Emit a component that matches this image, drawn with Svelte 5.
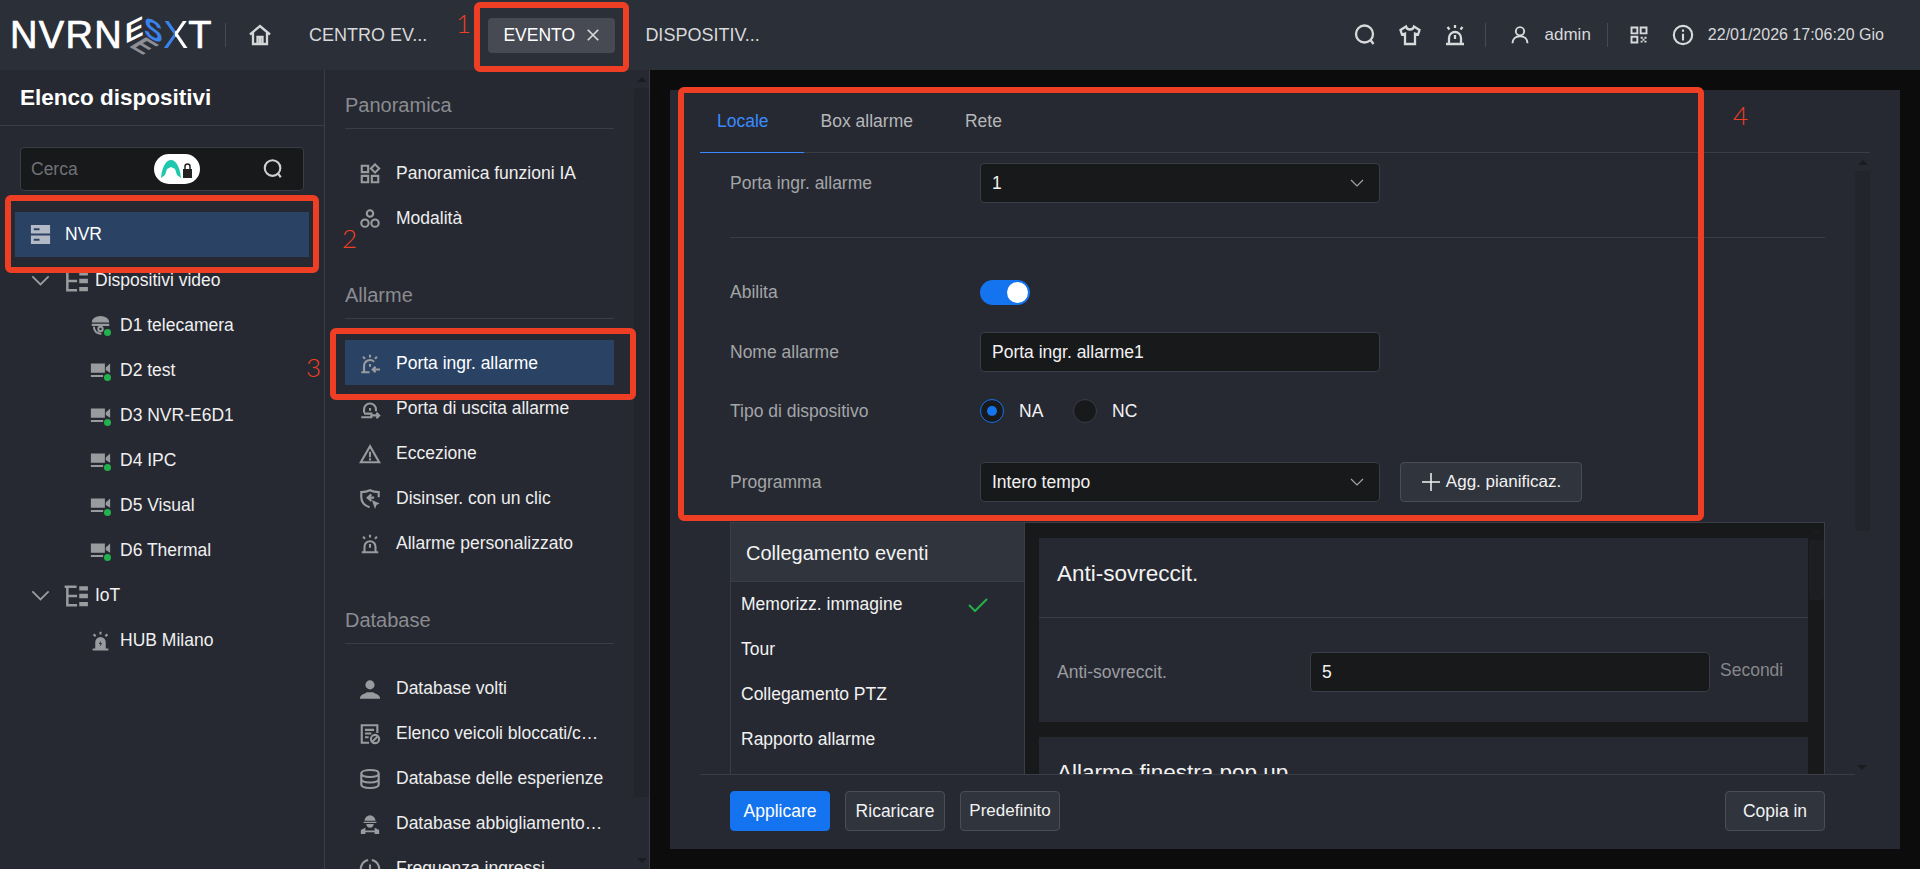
<script>
  const circle = (x, y, r) => `M${x - r} ${y}a${r} ${r} 0 1 0 ${r * 2} 0a${r} ${r} 0 1 0 ${-r * 2} 0z`;

  // each icon: list of [path, 'f' (filled) or 's' (stroked)]
  const icons = {
    home: [['M2 11.500 12 3l10 8.500M5 9.500V21h14V9.500M9.500 21v-7h5v7M12 14v7', 's']],
    search: [[circle(11.500, 11, 8.500), 's'], ['M17.500 17l3 4', 's']],
    shirt: [['M8 3.500 2.500 7l1.500 4.500L7 10.500V21h10V10.500l3 1L21.500 7 16 3.500c-.5 2-2 3-4 3s-3.500-1-4-3z', 's']],
    siren: [['M6 20v-5a6 6 0 0 1 12 0v5M3 21h18M12 2v3M4.500 4l2 2.500M19.500 4l-2 2.500M12 12v4', 's']],
    user: [[circle(12, 7.500, 5), 's'], ['M3 22c0-5 3.500-8.500 9-8.500s9 3.500 9 8.500', 's']],
    qr: [['M3 3h7v7H3zM14 3h7v7h-7zM3 14h7v7H3z', 's'], ['M14 14h2.500v2.500H14zM18.500 14H21v2.500h-2.500zM16.300 16.500h2.200v2.300h-2.200zM14 18.800h2.300V21H14zM18.500 18.800H21V21h-2.500z', 'f']],
    info: [[circle(12, 12, 10), 's'], ['M12 10.500V18M12 6v2.500', 's']],
    close: [['M5 5l14 14M19 5 5 19', 's']],
    server: [['M2 2h20v9H2zM5 5.500v2h6v-2zM2 13h20v9H2zM5 16.500v2h6v-2z', 'f']],
    tree: [['M15 3h8v4h-8zM15 10h8v4h-8zM15 17.500h8v4h-8z', 'f'], ['M1.500 3.500h11M4 3.500v17h9M4 12h9', 's']],
    dome: [['M2 8.500a10 7.500 0 0 1 20 0zM2 10h20v2.500H2z', 'f'], ['M4.500 13.500c0 5 3.500 8 8.500 8', 's'], [circle(12, 16, 2.500), 's']],
    cam: [['M1 4h16v10.500H1zM18 8.500 23 4v10.500l-5-3zM1 17h14v2.500H1z', 'f']],
    hub: [['M6 21v-7a6 6 0 0 1 12 0v7zM13 12l-3 4h2l-1 3 3-4h-2zM3 21h18v2.500H3z', 'f'], ['M12 2v3M4 5l2.500 2M20 5l-2.500 2', 's']],
    ai: [['M3 3h7v7H3zM3 14h7v7H3zM14 14h7v7h-7zM17.500 1.500l4.500 4.500-4.500 4.500L13 6z', 's']],
    mode: [[circle(12, 6, 3.500), 's'], [circle(6.500, 16.500, 4), 's'], [circle(17.500, 16.500, 4), 's']],
    alarmIn: [['M5.500 20v-6a6.500 6.500 0 0 1 11-4.500M2.500 21h9M12 2v3M4.500 4l2 2.500M19.500 4l-2 2.500M12 12v3M23 18h-8M18 15l-3 3 3 3', 's']],
    alarmOut: [['M5.500 16v-3.500a6.500 6.500 0 0 1 13 0v2M2.500 21h11v-4H5.500M12 11v3M14 19h8M19 16l3 3-3 3', 's']],
    warn: [['M12 3.500 2 21h20z', 's'], ['M12 9.500v6M12 16.500v2.500', 's']],
    shield: [['M21.500 10V4.500C16 4.500 14 3.500 12 2.500c-2 1-4 2-9.500 2V10c0 5 3.500 9 9 11', 's'], ['M13.500 7l-4 3.500 4 3.500M9.500 10.500h7', 's'], ['M14 13l8.500 4-3.500 1.500L17.500 23z', 'f']],
    person: [[circle(12, 7.500, 5), 'f'], ['M1 22.500c0-4.500 5-5 7.500-7h7c2.500 2 7.500 2.500 7.500 7z', 'f']],
    list: [['M20 11V2.500H3v19h8M6.500 7.500h10M6.500 11.500h7M6.500 15.500h4', 's'], [circle(17.500, 17.500, 4.500), 's'], ['M14.500 20.500l6-6', 's']],
    db: [['M2.500 6c0-5 19-5 19 0s-19 5-19 0zM2.500 6v12c0 5 19 5 19 0V6M2.500 12c0 5 19 5 19 0', 's']],
    worker: [['M6 8.500a6 6 0 0 1 12 0zM5 9.500h14V11H5zM8 12h8c0 2.500-1.500 4-4 4s-4-1.500-4-4zM2 23v-4.500L7 16v3h10v-3l5 2.500V23h-5v-2H7v2z', 'f']],
    chart: [['M10 2.200a10 10 0 1 0 4 0', 's'], ['M8 18v-4M12 18V7M16 18v-6', 's']]
  };

  const tree = [
    { label: 'Dispositivi video', icon: 'tree', group: true },
    { label: 'D1 telecamera', icon: 'dome', online: true },
    { label: 'D2 test', icon: 'cam', online: true },
    { label: 'D3 NVR-E6D1', icon: 'cam', online: true },
    { label: 'D4 IPC', icon: 'cam', online: true },
    { label: 'D5 Visual', icon: 'cam', online: true },
    { label: 'D6 Thermal', icon: 'cam', online: true },
    { label: 'IoT', icon: 'tree', group: true },
    { label: 'HUB Milano', icon: 'hub' }
  ];

  const groups = [
    {
      title: 'Panoramica',
      items: [
        { label: 'Panoramica funzioni IA', icon: 'ai' },
        { label: 'Modalità', icon: 'mode' }
      ]
    },
    {
      title: 'Allarme',
      items: [
        { label: 'Porta ingr. allarme', icon: 'alarmIn', active: true },
        { label: 'Porta di uscita allarme', icon: 'alarmOut' },
        { label: 'Eccezione', icon: 'warn' },
        { label: 'Disinser. con un clic', icon: 'shield' },
        { label: 'Allarme personalizzato', icon: 'siren' }
      ]
    },
    {
      title: 'Database',
      items: [
        { label: 'Database volti', icon: 'person' },
        { label: 'Elenco veicoli bloccati/c…', icon: 'list' },
        { label: 'Database delle esperienze', icon: 'db' },
        { label: 'Database abbigliamento…', icon: 'worker' },
        { label: 'Frequenza ingressi', icon: 'chart' }
      ]
    }
  ];

  const links = ['Memorizz. immagine', 'Tour', 'Collegamento PTZ', 'Rapporto allarme'];
</script>

{#snippet icon(name, size = 20)}
  <svg class="icon" width={size} height={size} viewBox="0 0 24 24" aria-hidden="true">
    {#each icons[name] as [d, mode]}
      {#if mode === 'f'}
        <path {d} fill="currentColor" fill-rule="evenodd" />
      {:else}
        <path {d} fill="none" stroke="currentColor" stroke-width="2.300" />
      {/if}
    {/each}
  </svg>
{/snippet}

{#snippet chevron(width = 14, weight = 1.200)}
  <svg class="chevron" {width} height={width * 0.55} viewBox="0 0 14 7.700" aria-hidden="true">
    <path d="M1 1l6 6 6-6" fill="none" stroke="currentColor" stroke-width={weight} />
  </svg>
{/snippet}

<div class="app">
  <header class="topbar">
    <div class="logo">
      <span class="logo-n">NVRN</span>
      <svg class="cube" width="44" height="44" viewBox="0 0 44 44" aria-hidden="true">
        <text class="cube-e" transform="matrix(1 -.5 0 1 3 31)">E</text>
        <text class="cube-s" transform="matrix(1 .5 0 1 22 22)">S</text>
        <text class="cube-g" transform="matrix(.85 .5 -.85 .5 6 33)">E</text>
      </svg>
      <span class="logo-x">X</span><span>T</span>
    </div>
    <span class="vline logo-line"></span>
    <span class="home">{@render icon('home', 24)}</span>
    <span class="nav nav-first">CENTRO EV...</span>
    <span class="tab-pill">EVENTO <span class="pill-x">{@render icon('close', 18)}</span></span>
    <span class="nav">DISPOSITIV...</span>

    <div class="top-right">
      <span class="top-icon">{@render icon('search', 24)}</span>
      <span class="top-icon">{@render icon('shirt', 24)}</span>
      <span class="top-icon siren">{@render icon('siren', 24)}</span>
      <span class="vline sep-user"></span>
      <span class="top-icon user">{@render icon('user', 20)}</span>
      <span class="admin">admin</span>
      <span class="vline sep-qr"></span>
      <span class="top-icon qr">{@render icon('qr', 20)}</span>
      <span class="top-icon info">{@render icon('info', 22)}</span>
      <span class="clock">22/01/2026 17:06:20 Gio</span>
    </div>
  </header>

  <div class="content">
    <aside class="devices">
      <h2>Elenco dispositivi</h2>
      <div class="search">
        <span class="placeholder">Cerca</span>
        <span class="badge">
          <svg width="34" height="22" viewBox="0 0 34 22" aria-hidden="true">
            <path d="M1 20C2 9 6 2 11 2s9 7 10 18l-4-3-2-6-4-2-4 2-2 6z" fill="#1fc7ae" />
            <path d="M23 11h9v9h-9z" fill="#222" />
            <path d="M25 11V8.500a2.500 2.500 0 0 1 5 0V11" fill="none" stroke="#222" stroke-width="1.500" />
          </svg>
        </span>
        <span class="search-icon">{@render icon('search', 22)}</span>
      </div>
      <div class="nvr">{@render icon('server', 23)}<span>NVR</span></div>
      <ul class="tree">
        {#each tree as node}
          <li class:group={node.group}>
            {#if node.group}<span class="tree-arrow">{@render chevron(19, 1.300)}</span>{/if}
            <span class="tree-icon" class:online={node.online}>{@render icon(node.icon, node.group ? 26 : 21)}</span>
            <span>{node.label}</span>
          </li>
        {/each}
      </ul>
    </aside>

    <nav class="menu">
      <div class="menu-scroll">
        {#each groups as group}
          <section class="menu-group">
            <h3>{group.title}</h3>
            <ul>
              {#each group.items as item}
                <li class:active={item.active}>
                  {@render icon(item.icon, 22)}
                  <span class="menu-label">{item.label}</span>
                </li>
              {/each}
            </ul>
          </section>
        {/each}
      </div>
      <div class="track menu-track"></div>
      <span class="arrow-down menu-down"></span>
    </nav>

    <main class="main">
      <div class="card">
        <div class="tabs">
          <span class="tab on">Locale</span>
          <span class="tab">Box allarme</span>
          <span class="tab">Rete</span>
        </div>

        <div class="page">
          <div class="row first">
            <span class="label">Porta ingr. allarme</span>
            <div class="field select"><span>1</span>{@render chevron()}</div>
          </div>
          <div class="rule"></div>
          <div class="row abilita">
            <span class="label">Abilita</span>
            <span class="toggle"></span>
          </div>
          <div class="row nome">
            <span class="label">Nome allarme</span>
            <div class="field"><span>Porta ingr. allarme1</span></div>
          </div>
          <div class="row tipo">
            <span class="label">Tipo di dispositivo</span>
            <span class="radio checked"></span><span class="radio-text">NA</span>
            <span class="radio"></span><span class="radio-text">NC</span>
          </div>
          <div class="row programma">
            <span class="label">Programma</span>
            <div class="field select"><span>Intero tempo</span>{@render chevron()}</div>
            <button class="btn add">
              <svg width="20" height="20" viewBox="0 0 20 20" aria-hidden="true">
                <path d="M10 1v18M1 10h18" stroke="currentColor" stroke-width="1.500" />
              </svg>
              Agg. pianificaz.
            </button>
          </div>

          <div class="linkage">
            <div class="link-list">
              <div class="link-head">Collegamento eventi</div>
              {#each links as link, i}
                <div class="link-item">
                  <span>{link}</span>
                  {#if i === 0}
                    <svg width="20" height="14" viewBox="0 0 20 14" aria-hidden="true">
                      <path d="M1 7l6 6L19 1" fill="none" stroke="#22b14c" stroke-width="2" />
                    </svg>
                  {/if}
                </div>
              {/each}
            </div>
            <div class="link-detail">
              <div class="panel">
                <div class="panel-title">Anti-sovreccit.</div>
                <div class="panel-row">
                  <span class="panel-label">Anti-sovreccit.</span>
                  <div class="field"><span>5</span></div>
                  <span class="unit">Secondi</span>
                </div>
              </div>
              <div class="panel second">
                <div class="panel-title">Allarme finestra pop up</div>
              </div>
              <div class="track detail-track"></div>
            </div>
          </div>
          <div class="track page-track"></div>
          <span class="arrow-down page-down"></span>
        </div>

        <footer class="actions">
          <button class="btn primary">Applicare</button>
          <button class="btn">Ricaricare</button>
          <button class="btn tight">Predefinito</button>
          <button class="btn copy">Copia in</button>
        </footer>
      </div>
    </main>
  </div>

  <!-- red callouts drawn on top of the screenshot -->
  <div class="mark m1"></div>
  <div class="mark m2"></div>
  <div class="mark m3"></div>
  <div class="mark m4"></div>
  <span class="num n1">1</span>
  <span class="num n2">2</span>
  <span class="num n3">3</span>
  <span class="num n4">4</span>
</div>

<style>
  :global(body) {
    margin: 0;
    background: #0c0c0c;
  }

  .app {
    position: relative;
    width: 1920px;
    height: 869px;
    overflow: hidden;
    font-family: "Liberation Sans", Arial, sans-serif;
    font-size: 17.5px;
    color: #e8e9ea;
  }

  ul {
    list-style: none;
    margin: 0;
    padding: 0;
  }

  .icon,
  .chevron {
    display: block;
    flex: none;
  }

  /* Top bar */
  .topbar {
    display: flex;
    align-items: center;
    height: 70px;
    background: #2b2f38;
  }

  .logo {
    display: flex;
    align-items: center;
    width: 215px;
    padding-left: 10px;
    box-sizing: border-box;
    font-size: 38px;
    font-weight: 400;
    color: #fff;
    -webkit-text-stroke: 0.7px #fff;
  }

  .logo-n {
    letter-spacing: 1.300px;
  }

  .cube {
    flex: none;
    overflow: visible;
    margin: 0 -3px 0 -1px;
  }

  .cube text {
    font-family: "Liberation Sans", Arial, sans-serif;
    font-weight: 700;
    font-size: 28px;
    -webkit-text-stroke: 0;
  }

  .cube-e {
    fill: #fff;
  }

  .cube-s {
    fill: #3a82ee;
  }

  .cube-g {
    fill: #8d8f94;
  }

  .logo-x {
    background: linear-gradient(90deg, #3a82ee 50%, #fff 50%);
    -webkit-background-clip: text;
    background-clip: text;
    color: transparent;
    -webkit-text-stroke: 0;
  }

  .vline {
    width: 1px;
    height: 24px;
    background: #454952;
    flex: none;
  }

  .logo-line {
    margin-left: 10px;
  }

  .home {
    margin-left: 22px;
    color: #d6d7d9;
  }

  .nav {
    font-size: 18px;
    color: #d8d9db;
    margin-left: 30px;
  }

  .nav-first {
    margin-left: 37px;
    margin-right: 61px;
  }

  .tab-pill {
    display: flex;
    align-items: center;
    gap: 9px;
    height: 35px;
    width: 127px;
    box-sizing: border-box;
    padding-left: 15px;
    background: #474a53;
    border-radius: 4px;
    color: #fff;
  }

  .pill-x {
    color: #d8d9db;
  }

  .top-right {
    display: flex;
    align-items: center;
    margin-left: auto;
    padding-right: 36px;
    color: #d8d9db;
  }

  .top-icon {
    margin-right: 21px;
  }

  .siren {
    margin-right: 18px;
  }

  .sep-user {
    margin-right: 24px;
  }

  .user {
    margin-right: 15px;
  }

  .admin {
    font-size: 17px;
    margin-right: 16px;
  }

  .sep-qr {
    margin-right: 21px;
  }

  .qr {
    margin-right: 23px;
  }

  .info {
    margin-right: 14px;
  }

  .clock {
    font-size: 16px;
  }

  /* Columns */
  .content {
    display: flex;
    height: 799px;
  }

  .devices,
  .menu {
    background: #262931;
    border-right: 1px solid #3a3d45;
    box-sizing: border-box;
    flex: none;
    width: 325px;
  }

  .devices h2 {
    margin: 0;
    height: 56px;
    box-sizing: border-box;
    padding: 14px 0 0 20px;
    border-bottom: 1px solid #3a3d45;
    font-size: 22.500px;
    line-height: 28px;
    color: #fff;
  }

  .search {
    display: flex;
    align-items: center;
    height: 44px;
    margin: 21px 20px 0;
    padding: 0 19px 0 10px;
    box-sizing: border-box;
    background: #18191b;
    border: 1px solid #3a3d45;
    border-radius: 4px;
  }

  .placeholder {
    width: 123px;
    color: #6f7277;
  }

  .badge {
    display: flex;
    align-items: center;
    justify-content: center;
    width: 46px;
    height: 30px;
    background: #fff;
    border-radius: 15px;
  }

  .search-icon {
    margin-left: auto;
    color: #cfd0d2;
  }

  .nvr {
    display: flex;
    align-items: center;
    gap: 13px;
    height: 45px;
    margin: 21px 15px 0;
    padding-left: 14px;
    background: #2a4365;
    color: #fff;
  }

  .nvr .icon {
    color: #b3bac6;
  }

  .tree li {
    display: flex;
    align-items: center;
    height: 45px;
    box-sizing: border-box;
    padding: 2px 0 0 90px;
    color: #f0f0f1;
  }

  .tree li.group {
    padding-left: 31px;
  }

  .tree-arrow {
    width: 32px;
    color: #9a9ca0;
  }

  .tree-icon {
    position: relative;
    width: 30px;
    color: #9a9b9e;
  }

  .group .tree-icon {
    width: 32px;
  }

  .tree-icon.online::after {
    content: '';
    position: absolute;
    right: 9px;
    bottom: 0;
    width: 7px;
    height: 7px;
    border-radius: 50%;
    background: #22b14c;
  }

  /* Function menu */
  .menu {
    position: relative;
  }

  .menu-scroll {
    width: 289px;
    padding-left: 20px;
    box-sizing: border-box;
  }

  .menu-group h3 {
    margin: 0;
    height: 50px;
    box-sizing: border-box;
    padding-top: 15px;
    border-bottom: 1px solid #3a3d45;
    font-size: 20px;
    font-weight: 400;
    line-height: 22px;
    color: #8a8c91;
  }

  .menu-group:first-child {
    padding-top: 9px;
  }

  .menu-group ul {
    padding-top: 21px;
    padding-bottom: 29px;
  }

  .menu-group li {
    display: flex;
    align-items: center;
    gap: 15px;
    height: 45px;
    box-sizing: border-box;
    padding: 2px 0 0 14px;
    color: #eeeeef;
  }

  .menu-group li .icon {
    color: #9a9b9e;
  }

  .menu-group li.active {
    background: #2a4365;
    color: #fff;
  }

  .menu-label {
    white-space: nowrap;
  }

  .track {
    position: absolute;
    width: 15px;
    background: #22252b;
    border-radius: 3px;
  }

  /* small arrow cap above each scrollbar */
  .track::before {
    content: '';
    position: absolute;
    left: 3px;
    top: -11px;
    border: 5px solid transparent;
    border-top: 0;
    border-bottom: 5px solid #1a1c20;
    width: 0;
  }

  .arrow-down {
    position: absolute;
    border: 5px solid transparent;
    border-bottom: 0;
    border-top: 5px solid #1a1c20;
  }

  .menu-track {
    left: 309px;
    top: 18px;
    height: 709px;
  }

  .menu-down {
    left: 312px;
    top: 788px;
  }

  /* Main panel */
  .main {
    flex: 1;
    padding: 20px;
    min-width: 0;
    background: #0c0c0c;
  }

  .card {
    display: flex;
    flex-direction: column;
    height: 759px;
    background: #262931;
  }

  .tabs {
    display: flex;
    flex: none;
    height: 63px;
    margin: 0 30px;
    box-sizing: border-box;
    border-bottom: 1px solid #3a3d45;
  }

  .tab {
    height: 63px;
    box-sizing: border-box;
    padding: 21px 35px 0 17px;
    color: #b5b7ba;
    line-height: 20px;
  }

  .tab.on {
    color: #3a8bff;
    border-bottom: 1px solid #3a8bff;
  }

  .page {
    position: relative;
    flex: none;
    height: 621px;
    overflow: hidden;
    margin: 0 30px;
    padding: 10px 45px 0 30px;
    box-sizing: border-box;
  }

  .page-track {
    right: 0;
    top: 18px;
    height: 360px;
  }

  .page-down {
    right: 3px;
    top: 612px;
  }

  .row {
    display: flex;
    align-items: center;
  }

  .label {
    width: 250px;
    flex: none;
    color: #a3a5a8;
  }

  .field {
    display: flex;
    align-items: center;
    justify-content: space-between;
    width: 400px;
    height: 40px;
    box-sizing: border-box;
    padding: 0 11px;
    background: #18191b;
    border: 1px solid #3a3d45;
    border-radius: 4px;
    color: #f2f2f3;
  }

  .field .chevron {
    color: #a3a5a8;
    margin-right: 4px;
  }

  .rule {
    height: 1px;
    margin-top: 34px;
    background: #3a3d45;
  }

  .abilita {
    margin-top: 42px;
  }

  .toggle {
    position: relative;
    width: 50px;
    height: 25px;
    border-radius: 13px;
    background: #1473ee;
  }

  .toggle::after {
    content: '';
    position: absolute;
    right: 2px;
    top: 2px;
    width: 21px;
    height: 21px;
    border-radius: 50%;
    background: #fff;
  }

  .nome {
    margin-top: 27px;
  }

  .tipo {
    margin-top: 27px;
  }

  .radio {
    position: relative;
    flex: none;
    width: 24px;
    height: 24px;
    box-sizing: border-box;
    border: 1px solid #3a3d45;
    border-radius: 50%;
    background: #18191b;
  }

  .radio.checked {
    border-color: #1473ee;
  }

  .radio.checked::after {
    content: '';
    position: absolute;
    inset: 6px;
    border-radius: 50%;
    background: #1473ee;
  }

  .radio-text {
    width: 54px;
    margin-left: 15px;
    color: #f2f2f3;
  }

  .programma {
    margin-top: 39px;
  }

  .btn {
    height: 40px;
    width: 100px;
    padding: 0;
    font: inherit;
    color: #f2f2f3;
    background: #30343c;
    border: 1px solid #4a4d55;
    border-radius: 4px;
  }

  .btn.tight {
    font-size: 17px;
  }

  .btn.add {
    display: flex;
    align-items: center;
    justify-content: center;
    gap: 5px;
    width: 182px;
    margin-left: 20px;
    font-size: 17px;
  }

  .btn.primary {
    background: #1473ee;
    border-color: #1473ee;
    color: #fff;
  }

  /* Event linkage */
  .linkage {
    display: flex;
    margin-top: 20px;
    border: 1px solid #3a3d45;
    height: 400px;
    box-sizing: border-box;
  }

  .link-list {
    flex: none;
    width: 293px;
    border-right: 1px solid #3a3d45;
  }

  .link-head {
    height: 58px;
    padding-left: 15px;
    line-height: 60px;
    font-size: 20px;
    color: #f2f2f3;
    background: #30343c;
    border-bottom: 1px solid #3a3d45;
  }

  .link-item {
    display: flex;
    align-items: center;
    justify-content: space-between;
    height: 45px;
    padding: 0 36px 0 10px;
    color: #f2f2f3;
  }

  .link-detail {
    position: relative;
    flex: 1;
    min-width: 0;
    padding: 15px 16px 0 14px;
    background: #18191b;
  }

  .detail-track {
    right: 0;
    top: 17px;
    height: 60px;
    background: #1d1e21;
  }

  .panel {
    height: 184px;
    background: #262931;
  }

  .panel.second {
    margin-top: 15px;
  }

  .panel-title {
    height: 80px;
    box-sizing: border-box;
    padding: 23px 0 0 18px;
    font-size: 22.500px;
    line-height: 26px;
    color: #f2f2f3;
    border-bottom: 1px solid #3a3d45;
  }

  .panel.second .panel-title {
    border-bottom: 0;
  }

  .panel-row {
    display: flex;
    align-items: center;
    padding: 34px 0 0 18px;
  }

  .panel-label {
    width: 253px;
    color: #9b9da1;
  }

  .unit {
    margin: -4px 0 0 10px;
    color: #85878b;
  }

  .actions {
    display: flex;
    gap: 15px;
    flex: none;
    height: 75px;
    margin: 0 45px 0 30px;
    padding: 16px 30px 0;
    box-sizing: border-box;
    border-top: 1px solid #3a3d45;
  }

  .copy {
    margin-left: auto;
  }

  /* Callouts */
  .mark {
    position: absolute;
    box-sizing: border-box;
    border: 6px solid #ee3f24;
    border-radius: 6px;
    pointer-events: none;
  }

  .m1 {
    left: 474px;
    top: 2px;
    width: 155px;
    height: 70px;
  }

  .m2 {
    left: 5px;
    top: 195px;
    width: 314px;
    height: 78px;
  }

  .m3 {
    left: 330px;
    top: 328px;
    width: 306px;
    height: 72px;
  }

  .m4 {
    left: 678px;
    top: 87px;
    width: 1026px;
    height: 434px;
  }

  .num {
    position: absolute;
    font-family: Lato, "Liberation Sans", sans-serif;
    font-weight: 300;
    font-size: 26px;
    line-height: 30px;
    color: #ee3f24;
  }

  .n1 {
    left: 456px;
    top: 8px;
  }

  .n2 {
    left: 342px;
    top: 223px;
  }

  .n3 {
    left: 306px;
    top: 352px;
  }

  .n4 {
    left: 1733px;
    top: 100px;
  }
</style>
